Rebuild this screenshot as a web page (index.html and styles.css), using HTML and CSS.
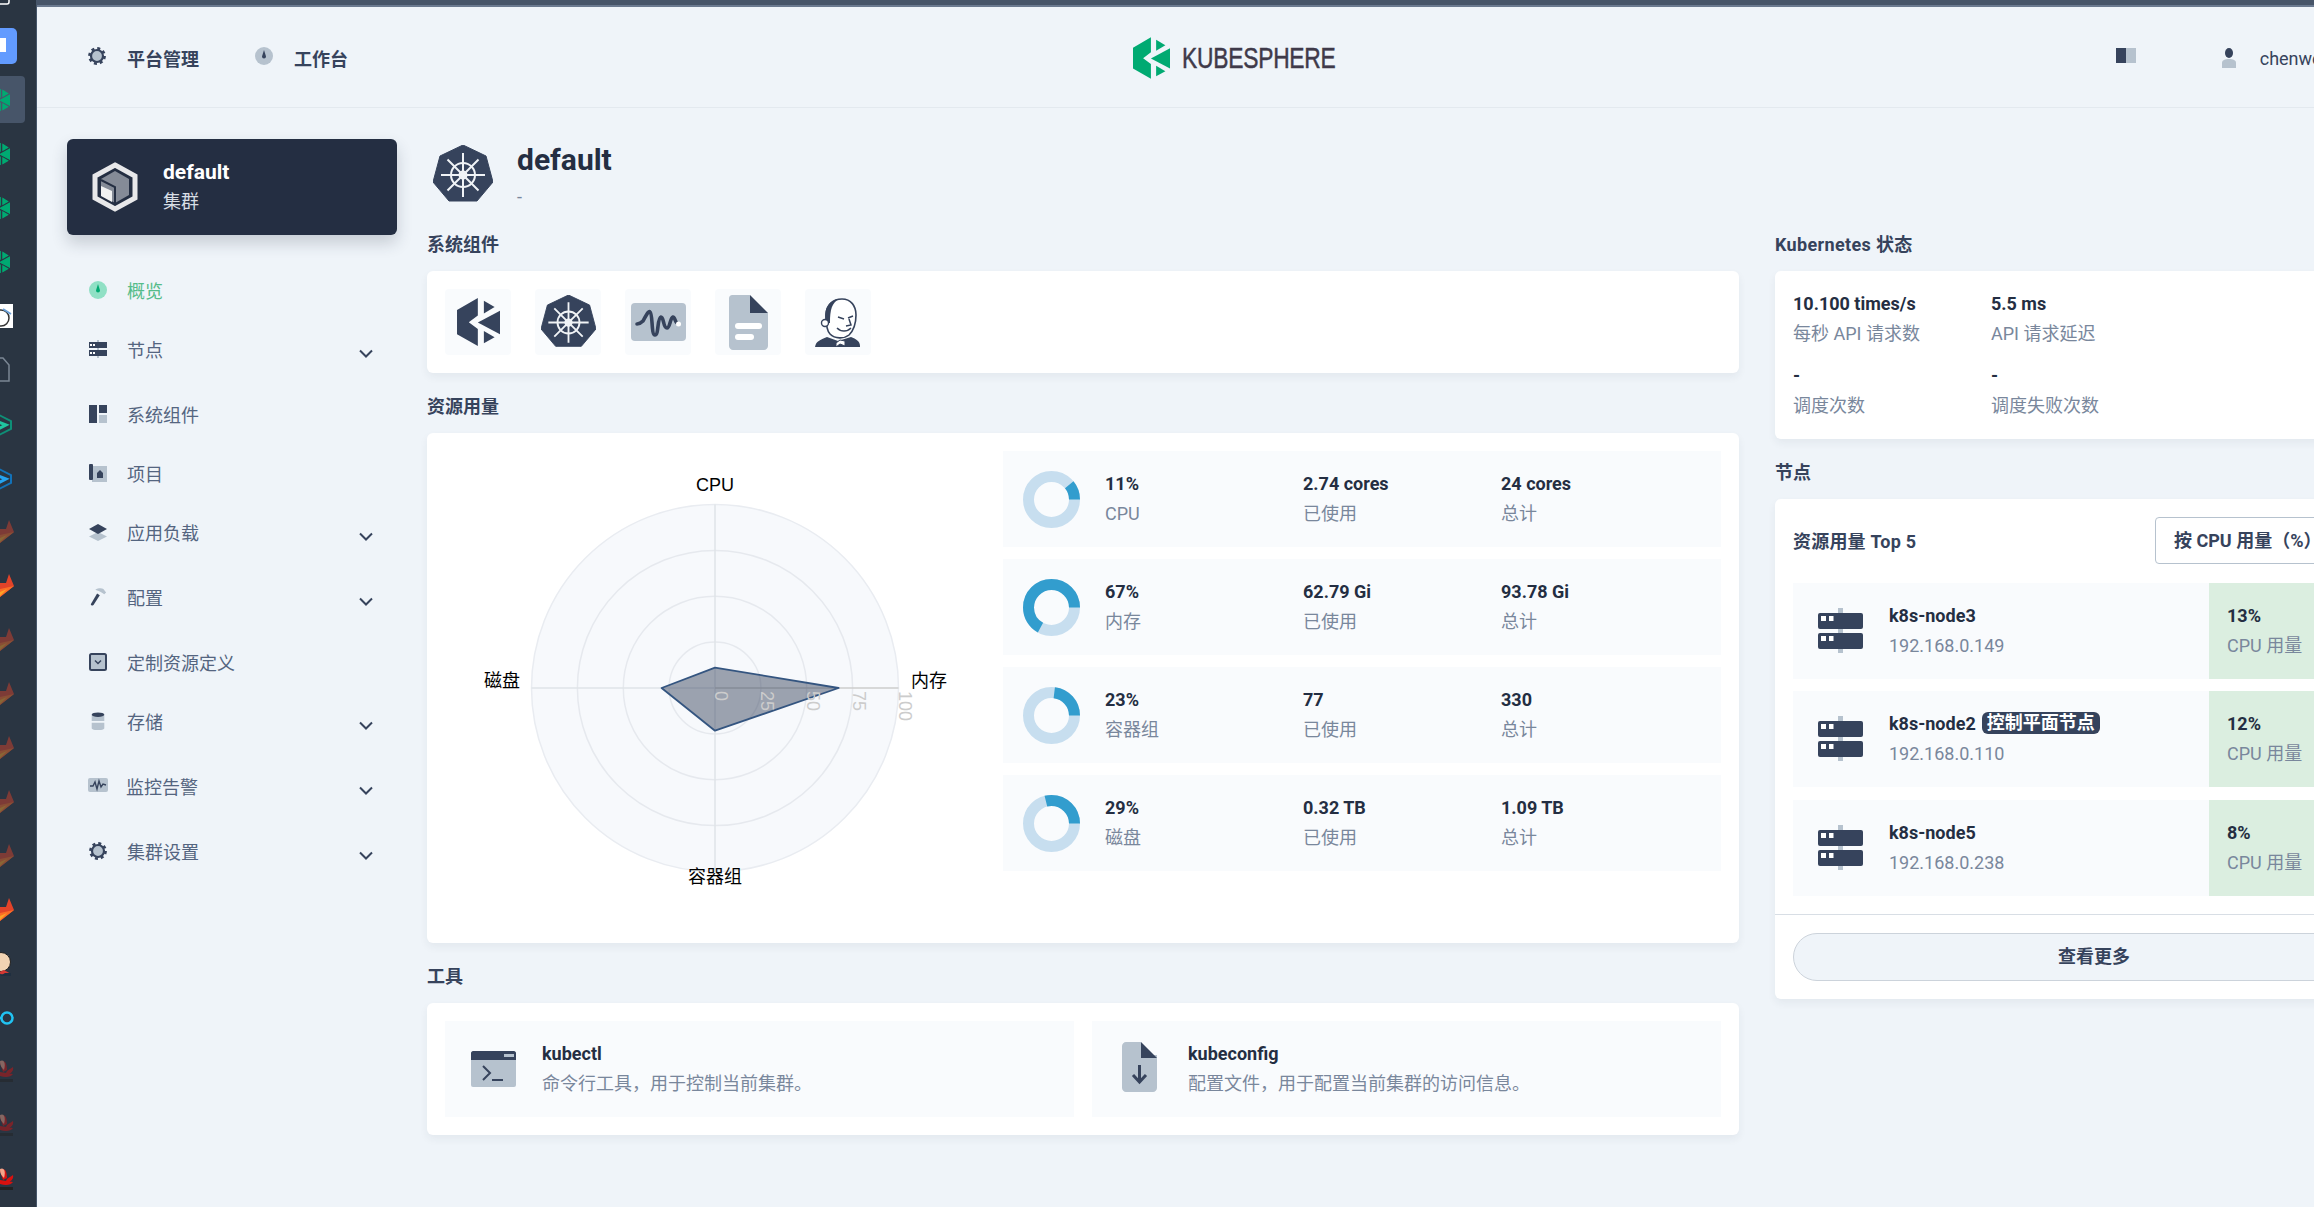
FILE: index.html
```html
<!DOCTYPE html>
<html lang="zh">
<head>
<meta charset="utf-8">
<title>KubeSphere</title>
<link rel="stylesheet" href="styles.css">
</head>
<body>
<svg class="defs" width="0" height="0" aria-hidden="true">
  <defs>
    <symbol id="ks" viewBox="0 0 128 143">
      <polygon points="0,36 62,0 62,52 35,72 62,92 62,143 0,108"/>
      <polygon points="128,38 128,108 62,73"/>
      <polygon points="80,8 112,27 80,46"/>
      <polygon points="80,98 112,117 80,135"/>
    </symbol>
    <symbol id="helm" viewBox="0 0 60 60">
      <polygon points="30,0 53,11 60,37 44,56 16,56 0,37 7,11" fill="#36435c" stroke="#36435c" stroke-width="1" stroke-linejoin="round"/>
      <g stroke="#f0f3f6" stroke-width="2" fill="none">
        <circle cx="30" cy="30" r="12"/>
        <circle cx="30" cy="30" r="3.5"/>
        <path d="M30 8V52M8 30H52M14.5 14.5L45.5 45.5M45.5 14.5L14.5 45.5"/>
      </g>
    </symbol>
    <symbol id="gear" viewBox="0 0 18 18">
      <circle cx="9" cy="9" r="7.6" fill="none" stroke="#36435c" stroke-width="2.6" stroke-dasharray="3 2.97"/>
      <circle cx="9" cy="9" r="6" fill="#b6c2ce" stroke="#36435c" stroke-width="2.2"/>
    </symbol>
    <symbol id="dash" viewBox="0 0 18 18">
      <circle cx="9" cy="9" r="9" fill="#b6c2ce"/>
      <path d="M9 3L11 9.5A2 2 0 1 1 7 9.5Z" fill="#36435c"/>
    </symbol>
    <symbol id="wave" viewBox="0 0 55 38">
      <rect width="55" height="38" rx="4" fill="#b6c2ce"/>
      <path d="M6 21C9 21 10 20 12 18C14 15 17 7 19 9C22 11 20 32 24 32C28 32 26 15 30 14C33 14 32 25 36 25C39 25 39 15 42 14C44 14 44 19 46 20" fill="none" stroke="#36435c" stroke-width="3.600" stroke-linecap="round"/>
      <circle cx="47.500" cy="21" r="2.500" fill="#fff"/>
    </symbol>
    <symbol id="server" viewBox="0 0 45 45">
      <rect x="20" y="0" width="5" height="45" fill="#b6c2ce"/>
      <rect x="0" y="5" width="45" height="16" rx="2" fill="#36435c"/>
      <rect x="0" y="25" width="45" height="16" rx="2" fill="#36435c"/>
      <path d="M3 8H8V13H3ZM11 8H15.500V13H11ZM3 28H8V33H3ZM11 28H15.500V33H11Z" fill="#fff"/>
    </symbol>
    <symbol id="fox" viewBox="0 0 14 24">
      <polygon points="0,9 6,9 9,0 14,12 0,23" fill="#e24329"/>
      <polygon points="0,15 14,12 0,23" fill="#fc6d26"/>
      <polygon points="0,18 7,15 0,22" fill="#fca326"/>
    </symbol>
    <symbol id="flower" viewBox="0 0 14 24">
      <path d="M0 4C4 0 7 3 7 11L3 13ZM7 12C9 10 12 9 13 8C14 12 11 15 5 16ZM0 13L13 15C11 18 6 19 0 17Z" fill="#d9110f"/>
      <path d="M0 2C4 0 6 4 4 11C2 9 0 7 0 2Z" fill="#f3a58a"/>
      <rect x="0" y="20" width="13" height="3" fill="#222"/>
    </symbol>
  </defs>
</svg>

<aside class="dock">
  <div class="dock-head"><svg width="36" height="19"><rect x="-8" y="-8" width="17" height="12" rx="2" fill="none" stroke="#fff" stroke-width="1.500"/></svg></div>
  <div class="dock-item"><svg width="36" height="54"><rect x="-18" y="9" width="35" height="36" rx="5" fill="#629bff"/><rect x="0" y="19" width="6" height="14" fill="#fff"/></svg></div>
  <div class="dock-item dock-active"><svg class="dock-ks" width="36" height="54"><use href="#ks" x="-9" y="16" width="19" height="22" fill="#00aa72" stroke="#00aa72" stroke-width="8"/></svg></div>
  <div class="dock-item"><svg width="36" height="54"><use href="#ks" x="-9" y="16" width="19" height="22" fill="#00aa72" stroke="#00aa72" stroke-width="8"/></svg></div>
  <div class="dock-item"><svg width="36" height="54"><use href="#ks" x="-9" y="16" width="19" height="22" fill="#00aa72" stroke="#00aa72" stroke-width="8"/></svg></div>
  <div class="dock-item"><svg width="36" height="54"><use href="#ks" x="-9" y="16" width="19" height="22" fill="#00aa72" stroke="#00aa72" stroke-width="8"/></svg></div>
  <div class="dock-item"><svg width="36" height="54"><rect x="-8" y="15" width="21" height="24" fill="#fff"/><circle cx="1" cy="29" r="8" fill="none" stroke="#333" stroke-width="1.500"/><path d="M3 20L11 25" stroke="#6aa0d8" stroke-width="2"/></svg></div>
  <div class="dock-item"><svg width="36" height="54"><path d="M-4 15H3L9 22V38H-4" fill="none" stroke="#7b8794" stroke-width="1.500"/></svg></div>
  <div class="dock-item"><svg width="36" height="54"><path d="M-5 16L11 24V32L-5 40" fill="none" stroke="#0e8f77" stroke-width="2"/><path d="M-4 24L6 28L-4 33" fill="none" stroke="#1fc5a0" stroke-width="3"/></svg></div>
  <div class="dock-item"><svg width="36" height="54"><path d="M-5 16L11 24V32L-5 40" fill="none" stroke="#1272b8" stroke-width="2"/><path d="M-4 24L6 28L-4 33" fill="none" stroke="#25a3f0" stroke-width="3"/></svg></div>
  <div class="dock-item dock-dim"><svg width="36" height="54"><use href="#fox" y="15" width="14" height="24"/></svg></div>
  <div class="dock-item"><svg width="36" height="54"><use href="#fox" y="15" width="14" height="24"/></svg></div>
  <div class="dock-item dock-dim"><svg width="36" height="54"><use href="#fox" y="15" width="14" height="24"/></svg></div>
  <div class="dock-item dock-dim"><svg width="36" height="54"><use href="#fox" y="15" width="14" height="24"/></svg></div>
  <div class="dock-item dock-dim"><svg width="36" height="54"><use href="#fox" y="15" width="14" height="24"/></svg></div>
  <div class="dock-item dock-dim"><svg width="36" height="54"><use href="#fox" y="15" width="14" height="24"/></svg></div>
  <div class="dock-item dock-dim"><svg width="36" height="54"><use href="#fox" y="15" width="14" height="24"/></svg></div>
  <div class="dock-item"><svg width="36" height="54"><use href="#fox" y="15" width="14" height="24"/></svg></div>
  <div class="dock-item"><svg width="36" height="54"><circle cx="1" cy="25" r="9.500" fill="#f1d3b3" stroke="#222" stroke-width="1"/><path d="M-3 36L4 33L11 37L5 38Z" fill="#d33833"/><path d="M5 36H11V39H0Z" fill="#1f2f40"/></svg></div>
  <div class="dock-item"><svg width="36" height="54"><circle cx="7" cy="27" r="5.500" fill="none" stroke="#21c3f2" stroke-width="2.500"/><path d="M-3 27H2" stroke="#21c3f2" stroke-width="2.500"/></svg></div>
  <div class="dock-item dock-dim"><svg width="36" height="54"><use href="#flower" y="14" width="14" height="24"/></svg></div>
  <div class="dock-item dock-dim"><svg width="36" height="54"><use href="#flower" y="14" width="14" height="24"/></svg></div>
  <div class="dock-item"><svg width="36" height="54"><use href="#flower" y="14" width="14" height="24"/></svg></div>
</aside>

<div class="app">
  <header class="topbar">
    <nav class="topnav">
      <a class="topnav-item"><svg class="ico18"><use href="#gear"/></svg><span>平台管理</span></a>
      <a class="topnav-item"><svg class="ico18"><use href="#dash"/></svg><span>工作台</span></a>
    </nav>
    <div class="logo">
      <svg class="logo-mark"><use href="#ks" fill="#00aa72"/></svg>
      <span class="logo-text">KUBESPHERE</span>
    </div>
    <div class="topuser">
      <svg class="book" viewBox="0 0 20 15"><rect width="10" height="15" fill="#36435c"/><rect x="10" width="10" height="15" fill="#b6c2ce"/></svg>
      <svg class="user" viewBox="0 0 14 20"><ellipse cx="7" cy="5" rx="4" ry="5" fill="#36435c"/><path d="M0 20V15C0 12 3 11 7 11C11 11 14 12 14 15V20Z" fill="#b6c2ce"/></svg>
      <span class="user-name">chenwei</span>
    </div>
  </header>

  <div class="layout">
    <aside class="side">
      <div class="cluster-card">
        <svg class="cluster-icon" viewBox="0 0 46 50">
          <polygon points="23,3 43,14 43,36 23,47 3,36 3,14" fill="none" stroke="#e8e8ea" stroke-width="5"/>
          <polygon points="23,9 37,17 37,33 23,41 9,33 9,17" fill="#858b97"/>
          <polygon points="9,24 20,29 20,40 9,34" fill="#f2f2f2"/>
          <path d="M9 18L23 25V41" fill="none" stroke="#242e42" stroke-width="2"/>
        </svg>
        <div class="cluster-text">
          <div class="cluster-name">default</div>
          <div class="cluster-type">集群</div>
        </div>
      </div>
      <ul class="menu">
        <li class="menu-item menu-leaf menu-active">
          <svg class="menu-ico" viewBox="0 0 18 18"><circle cx="9" cy="9" r="9" fill="#90e0c5"/><path d="M9 3L11 9.500A2 2 0 1 1 7 9.500Z" fill="#00aa72"/></svg><span>概览</span>
        </li>
        <li class="menu-item">
          <svg class="menu-ico" viewBox="0 0 18 18"><rect x="8" y="0" width="2" height="18" fill="#b6c2ce"/><rect y="2" width="18" height="6" fill="#36435c"/><rect y="10" width="18" height="6" fill="#36435c"/><path d="M1 4H3V6H1ZM4 4H6V6H4ZM1 12H3V14H1ZM4 12H6V14H4Z" fill="#fff"/></svg><span>节点</span>
          <svg class="chev" viewBox="0 0 14 9"><path d="M1 1.500L7 7.500L13 1.500" fill="none" stroke="#36435c" stroke-width="2"/></svg>
        </li>
        <li class="menu-item menu-leaf">
          <svg class="menu-ico" viewBox="0 0 18 18"><rect width="8" height="18" fill="#36435c"/><rect x="10" width="8" height="8" fill="#36435c"/><rect x="10" y="10" width="8" height="8" fill="#b6c2ce"/></svg><span>系统组件</span>
        </li>
        <li class="menu-item menu-leaf">
          <svg class="menu-ico" viewBox="0 0 18 18"><rect x="3" y="2" width="15" height="16" fill="#b6c2ce"/><rect width="4" height="16" rx="1" fill="#36435c"/><path d="M8 9L11 6L14 9V14H8Z" fill="#36435c"/></svg><span>项目</span>
        </li>
        <li class="menu-item">
          <svg class="menu-ico" viewBox="0 0 18 18"><polygon points="9,9 18,13.500 9,18 0,13.500" fill="#b6c2ce"/><polygon points="9,1 18,6 9,11 0,6" fill="#36435c"/></svg><span>应用负载</span>
          <svg class="chev" viewBox="0 0 14 9"><path d="M1 1.500L7 7.500L13 1.500" fill="none" stroke="#36435c" stroke-width="2"/></svg>
        </li>
        <li class="menu-item">
          <svg class="menu-ico" viewBox="0 0 18 20"><path d="M6 2C9 0 13 0 15 1L18 5L16 7L13 5C11 4 9 3 6 2Z" fill="#b6c2ce"/><path d="M8 6L11 8L4 19C3 20 1 19 1 18Z" fill="#36435c"/></svg><span>配置</span>
          <svg class="chev" viewBox="0 0 14 9"><path d="M1 1.500L7 7.500L13 1.500" fill="none" stroke="#36435c" stroke-width="2"/></svg>
        </li>
        <li class="menu-item menu-leaf">
          <svg class="menu-ico" viewBox="0 0 18 18"><rect x="1" y="1" width="16" height="16" rx="1.500" fill="#b6c2ce" stroke="#36435c" stroke-width="2"/><path d="M6 7.500L9 10.500L12 7.500" fill="none" stroke="#36435c" stroke-width="1.500"/></svg><span>定制资源定义</span>
        </li>
        <li class="menu-item">
          <svg class="menu-ico" viewBox="0 0 18 20"><path d="M2 3H16V10H2ZM2 12H16V18C16 21 2 21 2 18Z" fill="#b6c2ce"/><ellipse cx="9" cy="3" rx="7" ry="2.500" fill="#36435c"/></svg><span>存储</span>
          <svg class="chev" viewBox="0 0 14 9"><path d="M1 1.500L7 7.500L13 1.500" fill="none" stroke="#36435c" stroke-width="2"/></svg>
        </li>
        <li class="menu-item">
          <svg class="menu-ico menu-ico-wide" viewBox="0 0 20 14"><rect width="20" height="14" rx="2" fill="#b6c2ce"/><path d="M2 8H5L7 4L9 11L11 3L13 9L15 6L18 7" fill="none" stroke="#36435c" stroke-width="1.400"/></svg><span>监控告警</span>
          <svg class="chev" viewBox="0 0 14 9"><path d="M1 1.500L7 7.500L13 1.500" fill="none" stroke="#36435c" stroke-width="2"/></svg>
        </li>
        <li class="menu-item">
          <svg class="menu-ico"><use href="#gear"/></svg><span>集群设置</span>
          <svg class="chev" viewBox="0 0 14 9"><path d="M1 1.500L7 7.500L13 1.500" fill="none" stroke="#36435c" stroke-width="2"/></svg>
        </li>
      </ul>
    </aside>

    <main class="main">
      <div class="page-title">
        <svg class="page-icon"><use href="#helm"/></svg>
        <div>
          <h1 class="page-name">default</h1>
          <div class="page-desc">-</div>
        </div>
      </div>

      <section class="section">
        <h2 class="section-title">系统组件</h2>
        <div class="card components">
          <div class="tile"><svg class="t-ks"><use href="#ks" fill="#36435c"/></svg></div>
          <div class="tile"><svg class="t-helm"><use href="#helm"/></svg></div>
          <div class="tile"><svg class="t-wave"><use href="#wave"/></svg></div>
          <div class="tile">
            <svg class="t-doc" viewBox="0 0 39 55">
              <path d="M3 0H21V18H39V51C39 53 37 55 35 55H4C2 55 0 53 0 51V3C0 1 2 0 3 0Z" fill="#b6c2ce"/>
              <path d="M21 0L39 18H21Z" fill="#36435c"/>
              <rect x="6" y="28" width="27" height="6" rx="3" fill="#fff"/>
              <rect x="6" y="39" width="19" height="6" rx="3" fill="#fff"/>
            </svg>
          </div>
          <div class="tile">
            <svg class="t-jenkins" viewBox="0 0 46 50">
              <path d="M0 50C1 44 5 43 12 40L23 44L36 40C41 42 45 44 45 49L45 50Z" fill="#36435c"/>
              <path d="M21 46L25 43L30 44V49L25 47L21 50Z" fill="#fff" stroke="#36435c"/>
              <path d="M11 18C11 8 18 2 27 2C36 2 41 9 41 18C41 26 39 33 34 38C29 42 20 42 15 37C12 34 11 28 11 18Z" fill="#fff" stroke="#36435c" stroke-width="1.600"/>
              <path d="M11 26C8 12 14 3 24 2C17 6 15 12 15 26Z" fill="#36435c"/>
              <circle cx="10" cy="26" r="3.500" fill="#fff" stroke="#36435c" stroke-width="1.400"/>
              <path d="M23 20L29 22M33 21L38 19M34 22L36 28L31 29M22 31C26 35 32 35 36 31" fill="none" stroke="#36435c" stroke-width="1.500"/>
            </svg>
          </div>
        </div>
      </section>

      <section class="section">
        <h2 class="section-title">资源用量</h2>
        <div class="card usage">
          <svg class="radar" width="558" height="474" viewBox="0 0 558 474">
            <g transform="translate(270 237)">
              <circle r="183.500" fill="#f7f9fc" stroke="#e9ecf1" stroke-width="1.500"/>
              <g fill="none" stroke="#e6e9ee" stroke-width="1.500">
                <circle r="137.600"/><circle r="91.700"/><circle r="45.900"/>
              </g>
              <path d="M0 -183.500V183.500M-183.500 0H0" stroke="#e0e3e8" stroke-width="1.500"/>
              <path d="M0 0H183.500" stroke="#cccccc" stroke-width="1.500"/>
              <polygon points="0,-20.400 123.600,0 0,42.700 -53.400,0" fill="#36435c" fill-opacity=".48" stroke="#345580" stroke-width="1.800" stroke-linejoin="round"/>
              <g class="radar-ticks">
                <text transform="translate(13 3) rotate(90)">0</text>
                <text transform="translate(59 3) rotate(90)">25</text>
                <text transform="translate(105 3) rotate(90)">50</text>
                <text transform="translate(151 3) rotate(90)">75</text>
                <text transform="translate(197 3) rotate(90)">100</text>
              </g>
              <g class="radar-labels">
                <text x="0" y="-201.500" text-anchor="middle">CPU</text>
                <text x="196" y="-5.500">内存</text>
                <text x="-195" y="-5.500" text-anchor="end">磁盘</text>
                <text x="0" y="190.500" text-anchor="middle">容器组</text>
              </g>
            </g>
          </svg>
          <div class="res-list">
            <div class="res-row">
              <svg class="donut" viewBox="-28.500 -28.500 57 57"><circle class="donut-bg" r="23"/><circle class="donut-fg" r="23" pathLength="100" stroke-dasharray="11 100" transform="scale(1 -1)"/></svg>
              <div class="stat stat-w"><div class="val">11%</div><div class="lab">CPU</div></div>
              <div class="stat stat-w"><div class="val">2.74 cores</div><div class="lab">已使用</div></div>
              <div class="stat stat-w"><div class="val">24 cores</div><div class="lab">总计</div></div>
            </div>
            <div class="res-row">
              <svg class="donut" viewBox="-28.500 -28.500 57 57"><circle class="donut-bg" r="23"/><circle class="donut-fg" r="23" pathLength="100" stroke-dasharray="67 100" transform="scale(1 -1)"/></svg>
              <div class="stat stat-w"><div class="val">67%</div><div class="lab">内存</div></div>
              <div class="stat stat-w"><div class="val">62.79 Gi</div><div class="lab">已使用</div></div>
              <div class="stat stat-w"><div class="val">93.78 Gi</div><div class="lab">总计</div></div>
            </div>
            <div class="res-row">
              <svg class="donut" viewBox="-28.500 -28.500 57 57"><circle class="donut-bg" r="23"/><circle class="donut-fg" r="23" pathLength="100" stroke-dasharray="23 100" transform="scale(1 -1)"/></svg>
              <div class="stat stat-w"><div class="val">23%</div><div class="lab">容器组</div></div>
              <div class="stat stat-w"><div class="val">77</div><div class="lab">已使用</div></div>
              <div class="stat stat-w"><div class="val">330</div><div class="lab">总计</div></div>
            </div>
            <div class="res-row">
              <svg class="donut" viewBox="-28.500 -28.500 57 57"><circle class="donut-bg" r="23"/><circle class="donut-fg" r="23" pathLength="100" stroke-dasharray="29 100" transform="scale(1 -1)"/></svg>
              <div class="stat stat-w"><div class="val">29%</div><div class="lab">磁盘</div></div>
              <div class="stat stat-w"><div class="val">0.32 TB</div><div class="lab">已使用</div></div>
              <div class="stat stat-w"><div class="val">1.09 TB</div><div class="lab">总计</div></div>
            </div>
          </div>
        </div>
      </section>

      <section class="section">
        <h2 class="section-title">工具</h2>
        <div class="card tools">
          <div class="tool">
            <svg class="tool-term" viewBox="0 0 45 36">
              <rect y="2" width="45" height="34" rx="2" fill="#b6c2ce"/>
              <path d="M2 0H43C44 0 45 1 45 2V9H0V2C0 1 1 0 2 0Z" fill="#36435c"/>
              <path d="M33 3H43V6H33Z" fill="#b6c2ce"/>
              <path d="M12 15L19 22L12 29" fill="none" stroke="#36435c" stroke-width="2"/>
              <rect x="21" y="28" width="11" height="2" fill="#36435c"/>
            </svg>
            <div class="tool-text"><div class="val tool-name">kubectl</div><div class="lab">命令行工具，用于控制当前集群。</div></div>
          </div>
          <div class="tool">
            <svg class="tool-doc" viewBox="0 0 35 50">
              <path d="M4 0H19V13H35V46C35 48 33 50 31 50H4C2 50 0 48 0 46V4C0 2 2 0 4 0Z" fill="#b6c2ce"/>
              <path d="M19 0L35 16H19Z" fill="#36435c"/>
              <path d="M17.500 23V39M11 33L17.500 40L24 33" fill="none" stroke="#36435c" stroke-width="3"/>
            </svg>
            <div class="tool-text"><div class="val tool-name">kubeconfig</div><div class="lab">配置文件，用于配置当前集群的访问信息。</div></div>
          </div>
        </div>
      </section>
    </main>

    <aside class="right">
      <section class="section">
        <h2 class="section-title section-title-wide">Kubernetes 状态</h2>
        <div class="card k8s">
          <div class="stat"><div class="val">10.100 times/s</div><div class="lab">每秒 API 请求数</div></div>
          <div class="stat"><div class="val">5.5 ms</div><div class="lab">API 请求延迟</div></div>
          <div class="stat"><div class="val">-</div><div class="lab">调度次数</div></div>
          <div class="stat"><div class="val">-</div><div class="lab">调度失败次数</div></div>
        </div>
      </section>
      <section class="section">
        <h2 class="section-title">节点</h2>
        <div class="card nodes">
          <div class="nodes-body">
            <div class="nodes-head">
              <div class="nodes-title">资源用量 Top 5</div>
              <div class="select">按 CPU 用量（%）</div>
            </div>
            <div class="node">
              <svg class="node-ico"><use href="#server"/></svg>
              <div class="node-info"><div class="val">k8s-node3</div><div class="lab">192.168.0.149</div></div>
              <div class="node-metric"><div class="val">13%</div><div class="lab">CPU 用量</div></div>
            </div>
            <div class="node node-mid">
              <svg class="node-ico"><use href="#server"/></svg>
              <div class="node-info"><div class="val">k8s-node2<span class="tag">控制平面节点</span></div><div class="lab">192.168.0.110</div></div>
              <div class="node-metric"><div class="val">12%</div><div class="lab">CPU 用量</div></div>
            </div>
            <div class="node">
              <svg class="node-ico"><use href="#server"/></svg>
              <div class="node-info"><div class="val">k8s-node5</div><div class="lab">192.168.0.238</div></div>
              <div class="node-metric"><div class="val">8%</div><div class="lab">CPU 用量</div></div>
            </div>
          </div>
          <div class="nodes-foot"><div class="more">查看更多</div></div>
        </div>
      </section>
    </aside>
  </div>
</div>
</body>
</html>
```

FILE: styles.css
```css
* { box-sizing: border-box; }
html, body { margin: 0; padding: 0; }
body {
  width: 2314px;
  height: 1207px;
  overflow: hidden;
  display: flex;
  background: #eff4f9;
  font-family: Roboto, "Noto Sans CJK SC", sans-serif;
  font-size: 18px;
  color: #242e42;
}
.defs { position: absolute; }
svg { display: block; overflow: hidden; }

.dock {
  flex: 0 0 37px;
  height: 1207px;
  background: #2a3542;
  border-right: 1px solid #46566a;
  overflow: hidden;
}
.dock-head { height: 19px; }
.dock-item { height: 54px; }
.dock-dim svg { opacity: .45; }
.dock-active { position: relative; }
.dock-active::before {
  content: "";
  position: absolute;
  left: -8px;
  top: 3px;
  width: 33px;
  height: 47px;
  background: #475569;
  border-radius: 4px;
}
.dock-ks { position: relative; }

.app {
  flex: 0 0 2394px;
  width: 2394px;
  border-top: 5px solid #475569;
}
.topbar {
  height: 103px;
  border-top: 2px solid #6b7a90;
  border-bottom: 1px solid #e3e9ef;
  display: grid;
  grid-template-columns: 1fr auto 1fr;
  align-items: center;
}
.topnav { display: flex; padding-left: 51px; gap: 56px; margin-top: 2px; }
.topnav-item {
  display: flex;
  align-items: center;
  gap: 21px;
  font-weight: 700;
  color: #36435c;
}
.ico18 { width: 18px; height: 18px; margin-top: -4px; }
.logo { display: flex; align-items: center; gap: 12px; margin-top: 2px; }
.logo-mark { width: 37px; height: 42px; }
.logo-text {
  font-family: "Liberation Sans", sans-serif;
  font-size: 30px;
  line-height: 42px;
  letter-spacing: -0.3px;
  color: #3f3a4a;
  -webkit-text-stroke: 0.5px #3f3a4a;
  display: inline-block;
  width: 153px;
  white-space: nowrap;
  transform: scaleX(.76);
  transform-origin: left center;
}
.topuser {
  display: flex;
  justify-content: flex-end;
  align-items: center;
  padding-right: 105px;
  margin-top: 2px;
}
.book { width: 20px; height: 15px; margin-right: 86px; margin-top: -6px; }
.user { width: 14px; height: 20px; margin-right: 24px; }
.user-name { color: #36435c; }

.layout { display: flex; }
.side { flex: 0 0 390px; padding: 31px 30px 0; }
.cluster-card {
  width: 330px;
  height: 96px;
  background: #242e42;
  border-radius: 6px;
  box-shadow: 0 8px 16px rgba(36, 46, 66, .2);
  display: flex;
  align-items: center;
  padding-left: 25px;
  gap: 25px;
}
.cluster-icon { width: 46px; height: 50px; }
.cluster-name { color: #fff; font-size: 21px; font-weight: 700; line-height: 29px; }
.cluster-type { color: #d8dee5; line-height: 29px; }
.menu { list-style: none; margin: 37px 0 0; padding: 0 0 0 22px; width: 306px; }
.menu-item {
  display: flex;
  height: 65px;
  line-height: 40px;
  color: #546580;
}
.menu-leaf { height: 59px; }
.menu-active { color: #55bc8a; }
.menu-ico { width: 18px; height: 18px; margin: 9px 20px 0 0; flex: none; }
.menu-ico-wide { width: 20px; height: 14px; margin: 10px 18px 0 -1px; }
.chev { width: 14px; height: 9px; margin: 18px 0 0 auto; }

.main { flex: 0 0 1312px; padding: 37px 0 0; }
.right { flex: 0 0 638px; margin-left: 36px; padding-top: 103px; }
.page-title { display: flex; height: 66px; gap: 24px; margin-left: 6px; }
.page-icon { width: 60px; height: 60px; }
.page-name {
  margin: 0;
  font-size: 30px;
  line-height: 32px;
  font-weight: 700;
  color: #242e42;
  margin-top: -1px;
}
.page-desc { color: #79879c; font-size: 18px; line-height: 24px; margin-top: 9px; }
.section { margin-top: 22px; }
.section-title {
  margin: 0 0 14px;
  font-size: 18px;
  line-height: 24px;
  font-weight: 700;
  color: #36435c;
}
.section-title-wide { letter-spacing: .35px; }
.card {
  background: #fff;
  border-radius: 6px;
  box-shadow: 0 4px 8px rgba(36, 46, 66, .06);
}
.components { display: flex; gap: 24px; padding: 18px; height: 102px; }
.tile {
  width: 66px;
  height: 66px;
  background: #f9fbfd;
  border-radius: 4px;
  display: flex;
  align-items: center;
  justify-content: center;
}
.t-ks { width: 43px; height: 48px; }
.t-helm { width: 55px; height: 55px; }
.t-wave { width: 55px; height: 38px; }
.t-doc { width: 39px; height: 55px; }
.t-jenkins { width: 46px; height: 50px; }

.usage { display: flex; padding: 18px; height: 510px; }
.radar { flex: 0 0 558px; overflow: visible; }
.radar-labels text { font-family: "Liberation Sans", "Noto Sans CJK SC", sans-serif; font-size: 18px; fill: #000; dominant-baseline: middle; }
.radar-ticks text { font-family: "Liberation Sans", sans-serif; font-size: 18px; fill: #ccc; dominant-baseline: hanging; }
.res-list { display: flex; flex-direction: column; gap: 12px; width: 718px; }
.res-row {
  display: flex;
  align-items: flex-start;
  height: 96px;
  background: #f9fbfd;
  padding: 18px 0 18px 20px;
}
.donut { flex: none; width: 57px; height: 57px; margin-right: 25px; margin-top: 1.500px; }
.donut-bg, .donut-fg { fill: none; stroke-width: 11; }
.donut-bg { stroke: #c7deef; }
.donut-fg { stroke: #329dce; }
.stat-w { width: 198px; }
.val { font-weight: 700; line-height: 30px; color: #242e42; white-space: nowrap; }
.lab { line-height: 30px; color: #79879c; white-space: nowrap; }

.tools { display: flex; gap: 18px; padding: 18px; height: 132px; }
.tool {
  flex: 1;
  height: 96px;
  background: #f9fbfd;
  display: flex;
  align-items: center;
}
.tool-term { width: 45px; height: 36px; margin: 0 26px 0 26px; }
.tool-doc { width: 35px; height: 50px; margin: -4px 31px 0 30px; }

.k8s {
  display: grid;
  grid-template-columns: 198px 198px;
  row-gap: 12px;
  padding: 18px 18px 18px;
  height: 168px;
}
.nodes-body { padding: 18px 18px 18px; border-bottom: 1px solid #d8dee5; }
.nodes-head { display: flex; justify-content: space-between; align-items: center; margin-bottom: 19px; }
.nodes-title { font-weight: 700; color: #36435c; letter-spacing: .2px; margin-top: -2px; }
.select {
  width: 240px;
  height: 47px;
  border: 1px solid #b6c2ce;
  border-radius: 4px;
  padding-left: 18px;
  line-height: 45px;
  font-weight: 700;
  color: #36435c;
  white-space: nowrap;
  overflow: hidden;
  background: #fff;
}
.node {
  display: flex;
  height: 96px;
  background: #f9fbfd;
  margin-bottom: 12px;
}
.node:last-child { margin-bottom: 0; }
.node-mid { margin-bottom: 13px; }
.node-ico { width: 45px; height: 45px; margin: 25px 26px 0 25px; flex: none; }
.node-info { flex: 1; padding-top: 18px; }
.node-metric {
  flex: 0 0 186px;
  padding: 18px 0 0 18px;
  background: #dbeee0;
}
.tag {
  display: inline-block;
  height: 22px;
  margin-left: 6px;
  padding: 0 5px;
  line-height: 22px;
  border-radius: 6px;
  background: #36435c;
  color: #fff;
  vertical-align: 1px;
}
.nodes-foot { padding: 18px; }
.more {
  height: 48px;
  border: 1px solid #ccd3db;
  border-radius: 24px;
  background: #eff4f9;
  text-align: center;
  line-height: 46px;
  font-weight: 700;
  color: #36435c;
}
```
